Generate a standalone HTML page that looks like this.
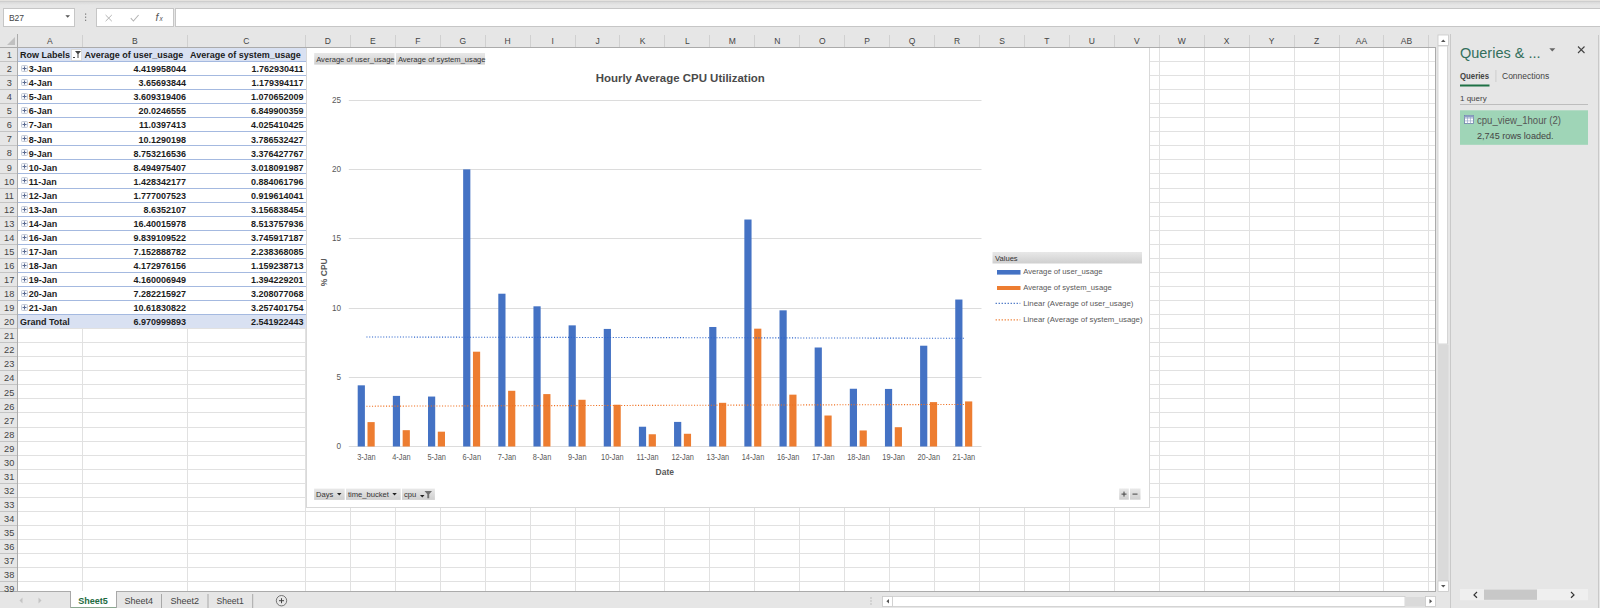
<!DOCTYPE html>
<html><head><meta charset="utf-8">
<style>
html,body{margin:0;padding:0;width:1600px;height:608px;overflow:hidden;background:#e6e6e6;font-family:"Liberation Sans", sans-serif;}
.a{position:absolute;}
svg text{font-family:"Liberation Sans", sans-serif;}
.hdr text{font-size:8.5px;fill:#444;}
.pv text{font-size:9.4px;font-weight:bold;fill:#1c1c1c;}
.ax{font-size:8.2px;fill:#595959;}
.axt{font-size:8.5px;fill:#595959;font-weight:bold;}
.title{font-size:11.6px;fill:#4a4a4a;font-weight:bold;}
.leg{font-size:7.6px;fill:#595959;}
.btn{font-size:7.6px;fill:#333;}
.tabA{font-size:9.3px;font-weight:bold;fill:#1e6b41;}
.tab{font-size:9.3px;fill:#444;}
.qt{font-size:15.5px;fill:#336f5c;}
.qtab{font-size:8.5px;fill:#444;}
.qs{font-size:8px;fill:#444;}
.qi{font-size:10px;fill:#555;}
.qr{font-size:8.5px;fill:#444;}
</style></head><body>
<div class="a" style="left:0;top:0;width:1600px;height:1px;background:#e4e2df"></div>
<div class="a" style="left:0;top:1px;width:1600px;height:1px;background:#cecece"></div>
<div class="a" style="left:0;top:2px;width:1600px;height:3px;background:linear-gradient(#d9d9d9,#e6e6e6)"></div>
<div class="a" style="left:3px;top:8px;width:70px;height:17px;background:#fff;border:1px solid #c6c6c6"></div>
<div class="a" style="left:96px;top:8px;width:76px;height:17px;border:1px solid #c6c6c6;background:#fff"></div>
<div class="a" style="left:175px;top:8px;width:1430px;height:17px;background:#fff;border:1px solid #c6c6c6"></div>
<svg class="a" style="left:0;top:0" width="1600" height="34">
<text x="8.9" y="21" textLength="15.2" lengthAdjust="spacingAndGlyphs" font-size="9px" fill="#444">B27</text>
<path d="M65.4 15.2 h4.6 l-2.3 2.6 z" fill="#555"/>
<rect x="85" y="13.5" width="1.2" height="1.2" fill="#777"/><rect x="85" y="16.6" width="1.2" height="1.2" fill="#777"/><rect x="85" y="19.7" width="1.2" height="1.2" fill="#777"/>
<path d="M105.6 15 l6.2 6.2 M111.8 15 l-6.2 6.2" stroke="#b4b4b4" stroke-width="1"/>
<path d="M130.8 18.2 l2.6 2.8 l5.2 -6" stroke="#b4b4b4" stroke-width="1.1" fill="none"/>
<text x="155.5" y="21.2" font-family="Liberation Serif" font-style="italic" font-size="10.5px" fill="#555">f</text><text x="159.5" y="21.2" font-family="Liberation Serif" font-style="italic" font-size="6.5px" fill="#555">x</text>
</svg>
<svg class="a" style="left:0;top:0" width="1600" height="608">
<defs><linearGradient id="gbtn" x1="0" y1="0" x2="0" y2="1"><stop offset="0" stop-color="#e8e8e8"/><stop offset="1" stop-color="#cfcfcf"/></linearGradient></defs>
<rect x="18" y="48" width="1417" height="543" fill="#fff"/>
<rect x="18" y="61" width="1417" height="1" fill="#e1e1e1"/><rect x="18" y="75" width="1417" height="1" fill="#e1e1e1"/><rect x="18" y="89" width="1417" height="1" fill="#e1e1e1"/><rect x="18" y="103" width="1417" height="1" fill="#e1e1e1"/><rect x="18" y="117" width="1417" height="1" fill="#e1e1e1"/><rect x="18" y="131" width="1417" height="1" fill="#e1e1e1"/><rect x="18" y="145" width="1417" height="1" fill="#e1e1e1"/><rect x="18" y="159" width="1417" height="1" fill="#e1e1e1"/><rect x="18" y="173" width="1417" height="1" fill="#e1e1e1"/><rect x="18" y="188" width="1417" height="1" fill="#e1e1e1"/><rect x="18" y="202" width="1417" height="1" fill="#e1e1e1"/><rect x="18" y="216" width="1417" height="1" fill="#e1e1e1"/><rect x="18" y="230" width="1417" height="1" fill="#e1e1e1"/><rect x="18" y="244" width="1417" height="1" fill="#e1e1e1"/><rect x="18" y="258" width="1417" height="1" fill="#e1e1e1"/><rect x="18" y="272" width="1417" height="1" fill="#e1e1e1"/><rect x="18" y="286" width="1417" height="1" fill="#e1e1e1"/><rect x="18" y="300" width="1417" height="1" fill="#e1e1e1"/><rect x="18" y="314" width="1417" height="1" fill="#e1e1e1"/><rect x="18" y="328" width="1417" height="1" fill="#e1e1e1"/><rect x="18" y="342" width="1417" height="1" fill="#e1e1e1"/><rect x="18" y="356" width="1417" height="1" fill="#e1e1e1"/><rect x="18" y="370" width="1417" height="1" fill="#e1e1e1"/><rect x="18" y="384" width="1417" height="1" fill="#e1e1e1"/><rect x="18" y="398" width="1417" height="1" fill="#e1e1e1"/><rect x="18" y="412" width="1417" height="1" fill="#e1e1e1"/><rect x="18" y="427" width="1417" height="1" fill="#e1e1e1"/><rect x="18" y="441" width="1417" height="1" fill="#e1e1e1"/><rect x="18" y="455" width="1417" height="1" fill="#e1e1e1"/><rect x="18" y="469" width="1417" height="1" fill="#e1e1e1"/><rect x="18" y="483" width="1417" height="1" fill="#e1e1e1"/><rect x="18" y="497" width="1417" height="1" fill="#e1e1e1"/><rect x="18" y="511" width="1417" height="1" fill="#e1e1e1"/><rect x="18" y="525" width="1417" height="1" fill="#e1e1e1"/><rect x="18" y="539" width="1417" height="1" fill="#e1e1e1"/><rect x="18" y="553" width="1417" height="1" fill="#e1e1e1"/><rect x="18" y="567" width="1417" height="1" fill="#e1e1e1"/><rect x="18" y="581" width="1417" height="1" fill="#e1e1e1"/><rect x="82" y="48" width="1" height="543" fill="#e1e1e1"/><rect x="187" y="48" width="1" height="543" fill="#e1e1e1"/><rect x="305" y="48" width="1" height="543" fill="#e1e1e1"/><rect x="350" y="48" width="1" height="543" fill="#e1e1e1"/><rect x="395" y="48" width="1" height="543" fill="#e1e1e1"/><rect x="440" y="48" width="1" height="543" fill="#e1e1e1"/><rect x="485" y="48" width="1" height="543" fill="#e1e1e1"/><rect x="530" y="48" width="1" height="543" fill="#e1e1e1"/><rect x="575" y="48" width="1" height="543" fill="#e1e1e1"/><rect x="619" y="48" width="1" height="543" fill="#e1e1e1"/><rect x="664" y="48" width="1" height="543" fill="#e1e1e1"/><rect x="709" y="48" width="1" height="543" fill="#e1e1e1"/><rect x="754" y="48" width="1" height="543" fill="#e1e1e1"/><rect x="799" y="48" width="1" height="543" fill="#e1e1e1"/><rect x="844" y="48" width="1" height="543" fill="#e1e1e1"/><rect x="889" y="48" width="1" height="543" fill="#e1e1e1"/><rect x="934" y="48" width="1" height="543" fill="#e1e1e1"/><rect x="979" y="48" width="1" height="543" fill="#e1e1e1"/><rect x="1024" y="48" width="1" height="543" fill="#e1e1e1"/><rect x="1069" y="48" width="1" height="543" fill="#e1e1e1"/><rect x="1114" y="48" width="1" height="543" fill="#e1e1e1"/><rect x="1159" y="48" width="1" height="543" fill="#e1e1e1"/><rect x="1204" y="48" width="1" height="543" fill="#e1e1e1"/><rect x="1249" y="48" width="1" height="543" fill="#e1e1e1"/><rect x="1294" y="48" width="1" height="543" fill="#e1e1e1"/><rect x="1339" y="48" width="1" height="543" fill="#e1e1e1"/><rect x="1383" y="48" width="1" height="543" fill="#e1e1e1"/><rect x="1428" y="48" width="1" height="543" fill="#e1e1e1"/><rect x="18" y="48" width="288" height="280" fill="#ffffff"/><rect x="18" y="48" width="288" height="13" fill="#d9e1f2"/><rect x="18" y="315" width="288" height="13" fill="#d9e1f2"/><rect x="18" y="61" width="288" height="1" fill="#a4b9e0"/><rect x="18" y="75" width="288" height="1" fill="#a4b9e0"/><rect x="18" y="89" width="288" height="1" fill="#a4b9e0"/><rect x="18" y="103" width="288" height="1" fill="#a4b9e0"/><rect x="18" y="117" width="288" height="1" fill="#a4b9e0"/><rect x="18" y="131" width="288" height="1" fill="#a4b9e0"/><rect x="18" y="145" width="288" height="1" fill="#a4b9e0"/><rect x="18" y="159" width="288" height="1" fill="#a4b9e0"/><rect x="18" y="173" width="288" height="1" fill="#a4b9e0"/><rect x="18" y="188" width="288" height="1" fill="#a4b9e0"/><rect x="18" y="202" width="288" height="1" fill="#a4b9e0"/><rect x="18" y="216" width="288" height="1" fill="#a4b9e0"/><rect x="18" y="230" width="288" height="1" fill="#a4b9e0"/><rect x="18" y="244" width="288" height="1" fill="#a4b9e0"/><rect x="18" y="258" width="288" height="1" fill="#a4b9e0"/><rect x="18" y="272" width="288" height="1" fill="#a4b9e0"/><rect x="18" y="286" width="288" height="1" fill="#a4b9e0"/><rect x="18" y="300" width="288" height="1" fill="#a4b9e0"/><rect x="18" y="314" width="288" height="1" fill="#a4b9e0"/><rect x="18" y="328" width="288" height="1" fill="#e1e1e1"/>
<g class="pv"><text textLength="50.01" lengthAdjust="spacingAndGlyphs" x="20" y="58.1">Row Labels</text><text textLength="98.71" lengthAdjust="spacingAndGlyphs" x="84.5" y="58.1">Average of user_usage</text><text textLength="110.72" lengthAdjust="spacingAndGlyphs" x="190" y="58.1">Average of system_usage</text><text textLength="23.51" lengthAdjust="spacingAndGlyphs" x="28.8" y="72.2">3-Jan</text><text textLength="52.55" lengthAdjust="spacingAndGlyphs" x="186" y="72.2" text-anchor="end">4.419958044</text><text textLength="52.06" lengthAdjust="spacingAndGlyphs" x="303.5" y="72.2" text-anchor="end">1.762930411</text><text textLength="23.51" lengthAdjust="spacingAndGlyphs" x="28.8" y="86.2">4-Jan</text><text textLength="47.55" lengthAdjust="spacingAndGlyphs" x="186" y="86.2" text-anchor="end">3.65693844</text><text textLength="52.06" lengthAdjust="spacingAndGlyphs" x="303.5" y="86.2" text-anchor="end">1.179394117</text><text textLength="23.51" lengthAdjust="spacingAndGlyphs" x="28.8" y="100.3">5-Jan</text><text textLength="52.55" lengthAdjust="spacingAndGlyphs" x="186" y="100.3" text-anchor="end">3.609319406</text><text textLength="52.55" lengthAdjust="spacingAndGlyphs" x="303.5" y="100.3" text-anchor="end">1.070652009</text><text textLength="23.51" lengthAdjust="spacingAndGlyphs" x="28.8" y="114.3">6-Jan</text><text textLength="47.55" lengthAdjust="spacingAndGlyphs" x="186" y="114.3" text-anchor="end">20.0246555</text><text textLength="52.55" lengthAdjust="spacingAndGlyphs" x="303.5" y="114.3" text-anchor="end">6.849900359</text><text textLength="23.51" lengthAdjust="spacingAndGlyphs" x="28.8" y="128.4">7-Jan</text><text textLength="47.05" lengthAdjust="spacingAndGlyphs" x="186" y="128.4" text-anchor="end">11.0397413</text><text textLength="52.55" lengthAdjust="spacingAndGlyphs" x="303.5" y="128.4" text-anchor="end">4.025410425</text><text textLength="23.51" lengthAdjust="spacingAndGlyphs" x="28.8" y="142.5">8-Jan</text><text textLength="47.55" lengthAdjust="spacingAndGlyphs" x="186" y="142.5" text-anchor="end">10.1290198</text><text textLength="52.55" lengthAdjust="spacingAndGlyphs" x="303.5" y="142.5" text-anchor="end">3.786532427</text><text textLength="23.51" lengthAdjust="spacingAndGlyphs" x="28.8" y="156.5">9-Jan</text><text textLength="52.55" lengthAdjust="spacingAndGlyphs" x="186" y="156.5" text-anchor="end">8.753216536</text><text textLength="52.55" lengthAdjust="spacingAndGlyphs" x="303.5" y="156.5" text-anchor="end">3.376427767</text><text textLength="28.52" lengthAdjust="spacingAndGlyphs" x="28.8" y="170.6">10-Jan</text><text textLength="52.55" lengthAdjust="spacingAndGlyphs" x="186" y="170.6" text-anchor="end">8.494975407</text><text textLength="52.55" lengthAdjust="spacingAndGlyphs" x="303.5" y="170.6" text-anchor="end">3.018091987</text><text textLength="28.02" lengthAdjust="spacingAndGlyphs" x="28.8" y="184.6">11-Jan</text><text textLength="52.55" lengthAdjust="spacingAndGlyphs" x="186" y="184.6" text-anchor="end">1.428342177</text><text textLength="52.55" lengthAdjust="spacingAndGlyphs" x="303.5" y="184.6" text-anchor="end">0.884061796</text><text textLength="28.52" lengthAdjust="spacingAndGlyphs" x="28.8" y="198.7">12-Jan</text><text textLength="52.55" lengthAdjust="spacingAndGlyphs" x="186" y="198.7" text-anchor="end">1.777007523</text><text textLength="52.55" lengthAdjust="spacingAndGlyphs" x="303.5" y="198.7" text-anchor="end">0.919614041</text><text textLength="28.52" lengthAdjust="spacingAndGlyphs" x="28.8" y="212.8">13-Jan</text><text textLength="42.54" lengthAdjust="spacingAndGlyphs" x="186" y="212.8" text-anchor="end">8.6352107</text><text textLength="52.55" lengthAdjust="spacingAndGlyphs" x="303.5" y="212.8" text-anchor="end">3.156838454</text><text textLength="28.52" lengthAdjust="spacingAndGlyphs" x="28.8" y="226.8">14-Jan</text><text textLength="52.55" lengthAdjust="spacingAndGlyphs" x="186" y="226.8" text-anchor="end">16.40015978</text><text textLength="52.55" lengthAdjust="spacingAndGlyphs" x="303.5" y="226.8" text-anchor="end">8.513757936</text><text textLength="28.52" lengthAdjust="spacingAndGlyphs" x="28.8" y="240.9">16-Jan</text><text textLength="52.55" lengthAdjust="spacingAndGlyphs" x="186" y="240.9" text-anchor="end">9.839109522</text><text textLength="52.55" lengthAdjust="spacingAndGlyphs" x="303.5" y="240.9" text-anchor="end">3.745917187</text><text textLength="28.52" lengthAdjust="spacingAndGlyphs" x="28.8" y="254.9">17-Jan</text><text textLength="52.55" lengthAdjust="spacingAndGlyphs" x="186" y="254.9" text-anchor="end">7.152888782</text><text textLength="52.55" lengthAdjust="spacingAndGlyphs" x="303.5" y="254.9" text-anchor="end">2.238368085</text><text textLength="28.52" lengthAdjust="spacingAndGlyphs" x="28.8" y="269.0">18-Jan</text><text textLength="52.55" lengthAdjust="spacingAndGlyphs" x="186" y="269.0" text-anchor="end">4.172976156</text><text textLength="52.55" lengthAdjust="spacingAndGlyphs" x="303.5" y="269.0" text-anchor="end">1.159238713</text><text textLength="28.52" lengthAdjust="spacingAndGlyphs" x="28.8" y="283.1">19-Jan</text><text textLength="52.55" lengthAdjust="spacingAndGlyphs" x="186" y="283.1" text-anchor="end">4.160006949</text><text textLength="52.55" lengthAdjust="spacingAndGlyphs" x="303.5" y="283.1" text-anchor="end">1.394229201</text><text textLength="28.52" lengthAdjust="spacingAndGlyphs" x="28.8" y="297.1">20-Jan</text><text textLength="52.55" lengthAdjust="spacingAndGlyphs" x="186" y="297.1" text-anchor="end">7.282215927</text><text textLength="52.55" lengthAdjust="spacingAndGlyphs" x="303.5" y="297.1" text-anchor="end">3.208077068</text><text textLength="28.52" lengthAdjust="spacingAndGlyphs" x="28.8" y="311.2">21-Jan</text><text textLength="52.55" lengthAdjust="spacingAndGlyphs" x="186" y="311.2" text-anchor="end">10.61830822</text><text textLength="52.55" lengthAdjust="spacingAndGlyphs" x="303.5" y="311.2" text-anchor="end">3.257401754</text><text textLength="49.83" lengthAdjust="spacingAndGlyphs" x="20" y="325.2">Grand Total</text><text textLength="52.55" lengthAdjust="spacingAndGlyphs" x="186" y="325.2" text-anchor="end">6.970999893</text><text textLength="52.55" lengthAdjust="spacingAndGlyphs" x="303.5" y="325.2" text-anchor="end">2.541922443</text></g>
<rect x="21.5" y="65.5" width="6" height="6" fill="#f4f6fa" stroke="#c3cad8" stroke-width="1" rx="1"/><path d="M22.5 68.5 h4 M24.5 66.5 v4" stroke="#5a6a90" stroke-width="1"/><rect x="21.5" y="79.5" width="6" height="6" fill="#f4f6fa" stroke="#c3cad8" stroke-width="1" rx="1"/><path d="M22.5 82.5 h4 M24.5 80.5 v4" stroke="#5a6a90" stroke-width="1"/><rect x="21.5" y="93.5" width="6" height="6" fill="#f4f6fa" stroke="#c3cad8" stroke-width="1" rx="1"/><path d="M22.5 96.5 h4 M24.5 94.5 v4" stroke="#5a6a90" stroke-width="1"/><rect x="21.5" y="107.5" width="6" height="6" fill="#f4f6fa" stroke="#c3cad8" stroke-width="1" rx="1"/><path d="M22.5 110.5 h4 M24.5 108.5 v4" stroke="#5a6a90" stroke-width="1"/><rect x="21.5" y="121.5" width="6" height="6" fill="#f4f6fa" stroke="#c3cad8" stroke-width="1" rx="1"/><path d="M22.5 124.5 h4 M24.5 122.5 v4" stroke="#5a6a90" stroke-width="1"/><rect x="21.5" y="135.5" width="6" height="6" fill="#f4f6fa" stroke="#c3cad8" stroke-width="1" rx="1"/><path d="M22.5 138.5 h4 M24.5 136.5 v4" stroke="#5a6a90" stroke-width="1"/><rect x="21.5" y="149.5" width="6" height="6" fill="#f4f6fa" stroke="#c3cad8" stroke-width="1" rx="1"/><path d="M22.5 152.5 h4 M24.5 150.5 v4" stroke="#5a6a90" stroke-width="1"/><rect x="21.5" y="163.5" width="6" height="6" fill="#f4f6fa" stroke="#c3cad8" stroke-width="1" rx="1"/><path d="M22.5 166.5 h4 M24.5 164.5 v4" stroke="#5a6a90" stroke-width="1"/><rect x="21.5" y="177.5" width="6" height="6" fill="#f4f6fa" stroke="#c3cad8" stroke-width="1" rx="1"/><path d="M22.5 180.5 h4 M24.5 178.5 v4" stroke="#5a6a90" stroke-width="1"/><rect x="21.5" y="192.5" width="6" height="6" fill="#f4f6fa" stroke="#c3cad8" stroke-width="1" rx="1"/><path d="M22.5 195.5 h4 M24.5 193.5 v4" stroke="#5a6a90" stroke-width="1"/><rect x="21.5" y="206.5" width="6" height="6" fill="#f4f6fa" stroke="#c3cad8" stroke-width="1" rx="1"/><path d="M22.5 209.5 h4 M24.5 207.5 v4" stroke="#5a6a90" stroke-width="1"/><rect x="21.5" y="220.5" width="6" height="6" fill="#f4f6fa" stroke="#c3cad8" stroke-width="1" rx="1"/><path d="M22.5 223.5 h4 M24.5 221.5 v4" stroke="#5a6a90" stroke-width="1"/><rect x="21.5" y="234.5" width="6" height="6" fill="#f4f6fa" stroke="#c3cad8" stroke-width="1" rx="1"/><path d="M22.5 237.5 h4 M24.5 235.5 v4" stroke="#5a6a90" stroke-width="1"/><rect x="21.5" y="248.5" width="6" height="6" fill="#f4f6fa" stroke="#c3cad8" stroke-width="1" rx="1"/><path d="M22.5 251.5 h4 M24.5 249.5 v4" stroke="#5a6a90" stroke-width="1"/><rect x="21.5" y="262.5" width="6" height="6" fill="#f4f6fa" stroke="#c3cad8" stroke-width="1" rx="1"/><path d="M22.5 265.5 h4 M24.5 263.5 v4" stroke="#5a6a90" stroke-width="1"/><rect x="21.5" y="276.5" width="6" height="6" fill="#f4f6fa" stroke="#c3cad8" stroke-width="1" rx="1"/><path d="M22.5 279.5 h4 M24.5 277.5 v4" stroke="#5a6a90" stroke-width="1"/><rect x="21.5" y="290.5" width="6" height="6" fill="#f4f6fa" stroke="#c3cad8" stroke-width="1" rx="1"/><path d="M22.5 293.5 h4 M24.5 291.5 v4" stroke="#5a6a90" stroke-width="1"/><rect x="21.5" y="304.5" width="6" height="6" fill="#f4f6fa" stroke="#c3cad8" stroke-width="1" rx="1"/><path d="M22.5 307.5 h4 M24.5 305.5 v4" stroke="#5a6a90" stroke-width="1"/><rect x="71.5" y="49.5" width="10" height="11" fill="#fff" stroke="#dadada"/><path d="M75 51 h6 l-2.5 3 v4 h-1 v-4 z" fill="#444"/><rect x="73" y="57" width="2" height="1" fill="#444"/>
<rect x="0" y="34" width="1436" height="14" fill="#e6e6e6"/><rect x="0" y="47" width="1436" height="1" fill="#ababab"/><rect x="0" y="48" width="17" height="543" fill="#e6e6e6"/><rect x="17" y="34" width="1" height="557" fill="#ababab"/><rect x="82" y="35" width="1" height="12" fill="#d0d0d0"/><rect x="187" y="35" width="1" height="12" fill="#d0d0d0"/><rect x="305" y="35" width="1" height="12" fill="#d0d0d0"/><rect x="350" y="35" width="1" height="12" fill="#d0d0d0"/><rect x="395" y="35" width="1" height="12" fill="#d0d0d0"/><rect x="440" y="35" width="1" height="12" fill="#d0d0d0"/><rect x="485" y="35" width="1" height="12" fill="#d0d0d0"/><rect x="530" y="35" width="1" height="12" fill="#d0d0d0"/><rect x="575" y="35" width="1" height="12" fill="#d0d0d0"/><rect x="619" y="35" width="1" height="12" fill="#d0d0d0"/><rect x="664" y="35" width="1" height="12" fill="#d0d0d0"/><rect x="709" y="35" width="1" height="12" fill="#d0d0d0"/><rect x="754" y="35" width="1" height="12" fill="#d0d0d0"/><rect x="799" y="35" width="1" height="12" fill="#d0d0d0"/><rect x="844" y="35" width="1" height="12" fill="#d0d0d0"/><rect x="889" y="35" width="1" height="12" fill="#d0d0d0"/><rect x="934" y="35" width="1" height="12" fill="#d0d0d0"/><rect x="979" y="35" width="1" height="12" fill="#d0d0d0"/><rect x="1024" y="35" width="1" height="12" fill="#d0d0d0"/><rect x="1069" y="35" width="1" height="12" fill="#d0d0d0"/><rect x="1114" y="35" width="1" height="12" fill="#d0d0d0"/><rect x="1159" y="35" width="1" height="12" fill="#d0d0d0"/><rect x="1204" y="35" width="1" height="12" fill="#d0d0d0"/><rect x="1249" y="35" width="1" height="12" fill="#d0d0d0"/><rect x="1294" y="35" width="1" height="12" fill="#d0d0d0"/><rect x="1339" y="35" width="1" height="12" fill="#d0d0d0"/><rect x="1383" y="35" width="1" height="12" fill="#d0d0d0"/><rect x="1428" y="35" width="1" height="12" fill="#d0d0d0"/><rect x="0" y="61" width="17" height="1" fill="#c4c4c4"/><rect x="0" y="75" width="17" height="1" fill="#c4c4c4"/><rect x="0" y="89" width="17" height="1" fill="#c4c4c4"/><rect x="0" y="103" width="17" height="1" fill="#c4c4c4"/><rect x="0" y="117" width="17" height="1" fill="#c4c4c4"/><rect x="0" y="131" width="17" height="1" fill="#c4c4c4"/><rect x="0" y="145" width="17" height="1" fill="#c4c4c4"/><rect x="0" y="159" width="17" height="1" fill="#c4c4c4"/><rect x="0" y="173" width="17" height="1" fill="#c4c4c4"/><rect x="0" y="188" width="17" height="1" fill="#c4c4c4"/><rect x="0" y="202" width="17" height="1" fill="#c4c4c4"/><rect x="0" y="216" width="17" height="1" fill="#c4c4c4"/><rect x="0" y="230" width="17" height="1" fill="#c4c4c4"/><rect x="0" y="244" width="17" height="1" fill="#c4c4c4"/><rect x="0" y="258" width="17" height="1" fill="#c4c4c4"/><rect x="0" y="272" width="17" height="1" fill="#c4c4c4"/><rect x="0" y="286" width="17" height="1" fill="#c4c4c4"/><rect x="0" y="300" width="17" height="1" fill="#c4c4c4"/><rect x="0" y="314" width="17" height="1" fill="#c4c4c4"/><rect x="0" y="328" width="17" height="1" fill="#c4c4c4"/><rect x="0" y="342" width="17" height="1" fill="#c4c4c4"/><rect x="0" y="356" width="17" height="1" fill="#c4c4c4"/><rect x="0" y="370" width="17" height="1" fill="#c4c4c4"/><rect x="0" y="384" width="17" height="1" fill="#c4c4c4"/><rect x="0" y="398" width="17" height="1" fill="#c4c4c4"/><rect x="0" y="412" width="17" height="1" fill="#c4c4c4"/><rect x="0" y="427" width="17" height="1" fill="#c4c4c4"/><rect x="0" y="441" width="17" height="1" fill="#c4c4c4"/><rect x="0" y="455" width="17" height="1" fill="#c4c4c4"/><rect x="0" y="469" width="17" height="1" fill="#c4c4c4"/><rect x="0" y="483" width="17" height="1" fill="#c4c4c4"/><rect x="0" y="497" width="17" height="1" fill="#c4c4c4"/><rect x="0" y="511" width="17" height="1" fill="#c4c4c4"/><rect x="0" y="525" width="17" height="1" fill="#c4c4c4"/><rect x="0" y="539" width="17" height="1" fill="#c4c4c4"/><rect x="0" y="553" width="17" height="1" fill="#c4c4c4"/><rect x="0" y="567" width="17" height="1" fill="#c4c4c4"/><rect x="0" y="581" width="17" height="1" fill="#c4c4c4"/><path d="M15 37 L15 45 L7 45 Z" fill="#c0c0c0"/><rect x="1435" y="48" width="1" height="544" fill="#ababab"/><rect x="0" y="591" width="1436" height="1" fill="#ababab"/>
<g class="hdr"><text x="49.9" y="44" text-anchor="middle">A</text><text x="134.9" y="44" text-anchor="middle">B</text><text x="246.3" y="44" text-anchor="middle">C</text><text x="327.9" y="44" text-anchor="middle">D</text><text x="372.8" y="44" text-anchor="middle">E</text><text x="417.8" y="44" text-anchor="middle">F</text><text x="462.7" y="44" text-anchor="middle">G</text><text x="507.6" y="44" text-anchor="middle">H</text><text x="552.6" y="44" text-anchor="middle">I</text><text x="597.5" y="44" text-anchor="middle">J</text><text x="642.5" y="44" text-anchor="middle">K</text><text x="687.4" y="44" text-anchor="middle">L</text><text x="732.3" y="44" text-anchor="middle">M</text><text x="777.3" y="44" text-anchor="middle">N</text><text x="822.2" y="44" text-anchor="middle">O</text><text x="867.1" y="44" text-anchor="middle">P</text><text x="912.1" y="44" text-anchor="middle">Q</text><text x="957.0" y="44" text-anchor="middle">R</text><text x="1002.0" y="44" text-anchor="middle">S</text><text x="1046.9" y="44" text-anchor="middle">T</text><text x="1091.8" y="44" text-anchor="middle">U</text><text x="1136.8" y="44" text-anchor="middle">V</text><text x="1181.7" y="44" text-anchor="middle">W</text><text x="1226.7" y="44" text-anchor="middle">X</text><text x="1271.6" y="44" text-anchor="middle">Y</text><text x="1316.5" y="44" text-anchor="middle">Z</text><text x="1361.5" y="44" text-anchor="middle">AA</text><text x="1406.4" y="44" text-anchor="middle">AB</text><text x="9.2" y="58.0" text-anchor="middle" style="font-size:9.2px">1</text><text x="9.2" y="72.1" text-anchor="middle" style="font-size:9.2px">2</text><text x="9.2" y="86.1" text-anchor="middle" style="font-size:9.2px">3</text><text x="9.2" y="100.2" text-anchor="middle" style="font-size:9.2px">4</text><text x="9.2" y="114.3" text-anchor="middle" style="font-size:9.2px">5</text><text x="9.2" y="128.3" text-anchor="middle" style="font-size:9.2px">6</text><text x="9.2" y="142.4" text-anchor="middle" style="font-size:9.2px">7</text><text x="9.2" y="156.4" text-anchor="middle" style="font-size:9.2px">8</text><text x="9.2" y="170.5" text-anchor="middle" style="font-size:9.2px">9</text><text x="9.2" y="184.6" text-anchor="middle" style="font-size:9.2px">10</text><text x="9.2" y="198.6" text-anchor="middle" style="font-size:9.2px">11</text><text x="9.2" y="212.7" text-anchor="middle" style="font-size:9.2px">12</text><text x="9.2" y="226.8" text-anchor="middle" style="font-size:9.2px">13</text><text x="9.2" y="240.8" text-anchor="middle" style="font-size:9.2px">14</text><text x="9.2" y="254.9" text-anchor="middle" style="font-size:9.2px">15</text><text x="9.2" y="268.9" text-anchor="middle" style="font-size:9.2px">16</text><text x="9.2" y="283.0" text-anchor="middle" style="font-size:9.2px">17</text><text x="9.2" y="297.1" text-anchor="middle" style="font-size:9.2px">18</text><text x="9.2" y="311.1" text-anchor="middle" style="font-size:9.2px">19</text><text x="9.2" y="325.2" text-anchor="middle" style="font-size:9.2px">20</text><text x="9.2" y="339.2" text-anchor="middle" style="font-size:9.2px">21</text><text x="9.2" y="353.3" text-anchor="middle" style="font-size:9.2px">22</text><text x="9.2" y="367.4" text-anchor="middle" style="font-size:9.2px">23</text><text x="9.2" y="381.4" text-anchor="middle" style="font-size:9.2px">24</text><text x="9.2" y="395.5" text-anchor="middle" style="font-size:9.2px">25</text><text x="9.2" y="409.5" text-anchor="middle" style="font-size:9.2px">26</text><text x="9.2" y="423.6" text-anchor="middle" style="font-size:9.2px">27</text><text x="9.2" y="437.7" text-anchor="middle" style="font-size:9.2px">28</text><text x="9.2" y="451.7" text-anchor="middle" style="font-size:9.2px">29</text><text x="9.2" y="465.8" text-anchor="middle" style="font-size:9.2px">30</text><text x="9.2" y="479.8" text-anchor="middle" style="font-size:9.2px">31</text><text x="9.2" y="493.9" text-anchor="middle" style="font-size:9.2px">32</text><text x="9.2" y="507.9" text-anchor="middle" style="font-size:9.2px">33</text><text x="9.2" y="522.0" text-anchor="middle" style="font-size:9.2px">34</text><text x="9.2" y="536.1" text-anchor="middle" style="font-size:9.2px">35</text><text x="9.2" y="550.1" text-anchor="middle" style="font-size:9.2px">36</text><text x="9.2" y="564.2" text-anchor="middle" style="font-size:9.2px">37</text><text x="9.2" y="578.2" text-anchor="middle" style="font-size:9.2px">38</text><text x="9.2" y="592.3" text-anchor="middle" style="font-size:9.2px">39</text></g>
<rect x="306" y="48" width="844" height="460" fill="#d9d9d9"/><rect x="307" y="48" width="842" height="459" fill="#ffffff"/><rect x="348.8" y="446" width="632.7" height="1" fill="#dcdcdc"/><text x="341" y="449.0" text-anchor="end" class="ax">0</text><rect x="348.8" y="377" width="632.7" height="1" fill="#dcdcdc"/><text x="341" y="380.0" text-anchor="end" class="ax">5</text><rect x="348.8" y="308" width="632.7" height="1" fill="#dcdcdc"/><text x="341" y="311.0" text-anchor="end" class="ax">10</text><rect x="348.8" y="238" width="632.7" height="1" fill="#dcdcdc"/><text x="341" y="241.0" text-anchor="end" class="ax">15</text><rect x="348.8" y="169" width="632.7" height="1" fill="#dcdcdc"/><text x="341" y="172.0" text-anchor="end" class="ax">20</text><rect x="348.8" y="100" width="632.7" height="1" fill="#dcdcdc"/><text x="341" y="103.0" text-anchor="end" class="ax">25</text><rect x="357.70" y="385.33" width="7.2" height="61.17" fill="#4472c4"/><rect x="367.50" y="422.10" width="7.2" height="24.40" fill="#ed7d31"/><text x="366.4" y="460" text-anchor="middle" textLength="18.46" lengthAdjust="spacingAndGlyphs" class="ax">3-Jan</text><rect x="392.85" y="395.89" width="7.2" height="50.61" fill="#4472c4"/><rect x="402.65" y="430.18" width="7.2" height="16.32" fill="#ed7d31"/><text x="401.5" y="460" text-anchor="middle" textLength="18.46" lengthAdjust="spacingAndGlyphs" class="ax">4-Jan</text><rect x="428.00" y="396.55" width="7.2" height="49.95" fill="#4472c4"/><rect x="437.80" y="431.68" width="7.2" height="14.82" fill="#ed7d31"/><text x="436.7" y="460" text-anchor="middle" textLength="18.46" lengthAdjust="spacingAndGlyphs" class="ax">5-Jan</text><rect x="463.15" y="169.36" width="7.2" height="277.14" fill="#4472c4"/><rect x="472.95" y="351.70" width="7.2" height="94.80" fill="#ed7d31"/><text x="471.8" y="460" text-anchor="middle" textLength="18.46" lengthAdjust="spacingAndGlyphs" class="ax">6-Jan</text><rect x="498.30" y="293.71" width="7.2" height="152.79" fill="#4472c4"/><rect x="508.10" y="390.79" width="7.2" height="55.71" fill="#ed7d31"/><text x="507.0" y="460" text-anchor="middle" textLength="18.46" lengthAdjust="spacingAndGlyphs" class="ax">7-Jan</text><rect x="533.45" y="306.31" width="7.2" height="140.19" fill="#4472c4"/><rect x="543.25" y="394.09" width="7.2" height="52.41" fill="#ed7d31"/><text x="542.1" y="460" text-anchor="middle" textLength="18.46" lengthAdjust="spacingAndGlyphs" class="ax">8-Jan</text><rect x="568.60" y="325.36" width="7.2" height="121.14" fill="#4472c4"/><rect x="578.40" y="399.77" width="7.2" height="46.73" fill="#ed7d31"/><text x="577.3" y="460" text-anchor="middle" textLength="18.46" lengthAdjust="spacingAndGlyphs" class="ax">9-Jan</text><rect x="603.75" y="328.93" width="7.2" height="117.57" fill="#4472c4"/><rect x="613.55" y="404.73" width="7.2" height="41.77" fill="#ed7d31"/><text x="612.4" y="460" text-anchor="middle" textLength="22.57" lengthAdjust="spacingAndGlyphs" class="ax">10-Jan</text><rect x="638.90" y="426.73" width="7.2" height="19.77" fill="#4472c4"/><rect x="648.70" y="434.26" width="7.2" height="12.24" fill="#ed7d31"/><text x="647.6" y="460" text-anchor="middle" textLength="22.02" lengthAdjust="spacingAndGlyphs" class="ax">11-Jan</text><rect x="674.05" y="421.91" width="7.2" height="24.59" fill="#4472c4"/><rect x="683.85" y="433.77" width="7.2" height="12.73" fill="#ed7d31"/><text x="682.7" y="460" text-anchor="middle" textLength="22.57" lengthAdjust="spacingAndGlyphs" class="ax">12-Jan</text><rect x="709.20" y="326.99" width="7.2" height="119.51" fill="#4472c4"/><rect x="719.00" y="402.81" width="7.2" height="43.69" fill="#ed7d31"/><text x="717.9" y="460" text-anchor="middle" textLength="22.57" lengthAdjust="spacingAndGlyphs" class="ax">13-Jan</text><rect x="744.35" y="219.52" width="7.2" height="226.98" fill="#4472c4"/><rect x="754.15" y="328.67" width="7.2" height="117.83" fill="#ed7d31"/><text x="753.0" y="460" text-anchor="middle" textLength="22.57" lengthAdjust="spacingAndGlyphs" class="ax">14-Jan</text><rect x="779.50" y="310.33" width="7.2" height="136.17" fill="#4472c4"/><rect x="789.30" y="394.66" width="7.2" height="51.84" fill="#ed7d31"/><text x="788.2" y="460" text-anchor="middle" textLength="22.57" lengthAdjust="spacingAndGlyphs" class="ax">16-Jan</text><rect x="814.65" y="347.50" width="7.2" height="99.00" fill="#4472c4"/><rect x="824.45" y="415.52" width="7.2" height="30.98" fill="#ed7d31"/><text x="823.3" y="460" text-anchor="middle" textLength="22.57" lengthAdjust="spacingAndGlyphs" class="ax">17-Jan</text><rect x="849.80" y="388.75" width="7.2" height="57.75" fill="#4472c4"/><rect x="859.60" y="430.46" width="7.2" height="16.04" fill="#ed7d31"/><text x="858.5" y="460" text-anchor="middle" textLength="22.57" lengthAdjust="spacingAndGlyphs" class="ax">18-Jan</text><rect x="884.95" y="388.93" width="7.2" height="57.57" fill="#4472c4"/><rect x="894.75" y="427.20" width="7.2" height="19.30" fill="#ed7d31"/><text x="893.6" y="460" text-anchor="middle" textLength="22.57" lengthAdjust="spacingAndGlyphs" class="ax">19-Jan</text><rect x="920.10" y="345.71" width="7.2" height="100.79" fill="#4472c4"/><rect x="929.90" y="402.10" width="7.2" height="44.40" fill="#ed7d31"/><text x="928.8" y="460" text-anchor="middle" textLength="22.57" lengthAdjust="spacingAndGlyphs" class="ax">20-Jan</text><rect x="955.25" y="299.54" width="7.2" height="146.96" fill="#4472c4"/><rect x="965.05" y="401.42" width="7.2" height="45.08" fill="#ed7d31"/><text x="963.9" y="460" text-anchor="middle" textLength="22.57" lengthAdjust="spacingAndGlyphs" class="ax">21-Jan</text><line x1="366.4" y1="336.97" x2="963.9" y2="338.29" stroke="#2f66cc" stroke-width="1.1" stroke-dasharray="1.1 1.7"/><line x1="366.4" y1="406.20" x2="963.9" y2="404.45" stroke="#f07020" stroke-width="1.1" stroke-dasharray="1.1 1.7"/><text x="595.7" y="82.3" textLength="169.2" lengthAdjust="spacingAndGlyphs" class="title">Hourly Average CPU Utilization</text><text transform="translate(327.2,272.2) rotate(-90)" text-anchor="middle" class="axt">% CPU</text><text x="664.8" y="474.8" text-anchor="middle" class="axt">Date</text><rect x="992.5" y="252" width="149.5" height="11.5" fill="url(#gbtn)"/><text x="995" y="260.8" class="btn">Values</text><rect x="997" y="270" width="23.5" height="4.6" fill="#4472c4"/><rect x="997" y="286" width="23.5" height="4.0" fill="#ed7d31"/><line x1="995.6" y1="303.3" x2="1020.3" y2="303.3" stroke="#4472c4" stroke-width="1.3" stroke-dasharray="1.3 1.7"/><line x1="995.6" y1="319.8" x2="1020.3" y2="319.8" stroke="#ed7d31" stroke-width="1.3" stroke-dasharray="1.3 1.7"/><text x="1023.2" y="273.9" textLength="79.3" lengthAdjust="spacingAndGlyphs" class="leg">Average of user_usage</text><text x="1023.2" y="289.9" textLength="88.5" lengthAdjust="spacingAndGlyphs" class="leg">Average of system_usage</text><text x="1023.2" y="305.9" textLength="110.2" lengthAdjust="spacingAndGlyphs" class="leg">Linear (Average of user_usage)</text><text x="1023.2" y="321.8" textLength="119.4" lengthAdjust="spacingAndGlyphs" class="leg">Linear (Average of system_usage)</text><rect x="314.2" y="53" width="80.3" height="11.6" fill="url(#gbtn)"/><text x="316.2" y="61.599999999999994" class="btn">Average of user_usage</text><rect x="395.9" y="53" width="89.1" height="11.6" fill="url(#gbtn)"/><text x="397.9" y="61.599999999999994" class="btn">Average of system_usage</text><rect x="314.1" y="488.6" width="30.6" height="11.3" fill="url(#gbtn)"/><text x="316.1" y="496.9" class="btn">Days</text><rect x="346" y="488.6" width="54.7" height="11.3" fill="url(#gbtn)"/><text x="348" y="496.9" class="btn">time_bucket</text><rect x="402" y="488.6" width="32.9" height="11.3" fill="url(#gbtn)"/><text x="404" y="496.9" class="btn">cpu</text><path d="M337 493 h4.5 l-2.25 2.5 z" fill="#222"/><path d="M392.3 493 h4.5 l-2.25 2.5 z" fill="#222"/><path d="M420 495 h4.5 l-2.25 2.5 z" fill="#222"/><path d="M424.5 491 h7.5 l-2.8 3.3 v4 h-1.9 v-4 z" fill="#707070"/><rect x="1119.2" y="488.5" width="9.6" height="11.2" fill="url(#gbtn)"/><text x="1121.2" y="496.7" class="btn"></text><rect x="1130" y="488.5" width="10.5" height="11.2" fill="url(#gbtn)"/><text x="1132" y="496.7" class="btn"></text><path d="M1121.5 494.1 h5 M1124 491.6 v5" stroke="#444" stroke-width="1"/><path d="M1132.5 494.1 h5" stroke="#444" stroke-width="1"/>
<rect x="1436" y="34" width="14" height="558" fill="#e6e6e6"/><rect x="1438" y="35" width="10.5" height="10.5" fill="#fff" stroke="#c8c8c8" stroke-width="0.8"/><path d="M1441 42 h4.5 l-2.25 -2.6 z" fill="#555"/><rect x="1438" y="46" width="9.6" height="298" fill="#fff" stroke="#cdcdcd" stroke-width="0.8"/><rect x="1438" y="345" width="10.5" height="236" fill="#dadada"/><rect x="1438" y="581" width="10.5" height="10.5" fill="#fff" stroke="#c8c8c8" stroke-width="0.8"/><path d="M1441 585 h4.5 l-2.25 2.6 z" fill="#555"/><rect x="1450" y="34" width="1" height="574" fill="#c9c9c9"/><rect x="0" y="592" width="1450" height="16" fill="#e6e6e6"/><path d="M22.5 597.5 l-3 3 l3 3 z" fill="#c4c4c4"/><path d="M38.5 597.5 l3 3 l-3 3 z" fill="#c4c4c4"/><rect x="70.5" y="591" width="46" height="17" fill="#fff"/><rect x="70" y="591" width="1" height="17" fill="#a8a8a8"/><rect x="116" y="591" width="1" height="17" fill="#a8a8a8"/><rect x="71" y="607" width="45" height="1" fill="#8aa890"/><text x="78.3" y="603.7" textLength="29.6" lengthAdjust="spacingAndGlyphs" class="tabA">Sheet5</text><text x="124.5" y="603.7" textLength="28.6" lengthAdjust="spacingAndGlyphs" class="tab">Sheet4</text><text x="170.5" y="603.7" textLength="28.6" lengthAdjust="spacingAndGlyphs" class="tab">Sheet2</text><text x="216.5" y="603.7" textLength="27.2" lengthAdjust="spacingAndGlyphs" class="tab">Sheet1</text><rect x="161" y="594" width="1" height="14" fill="#a8a8a8"/><rect x="207.5" y="594" width="1" height="14" fill="#a8a8a8"/><rect x="252.2" y="594" width="1" height="14" fill="#a8a8a8"/><circle cx="281.5" cy="600.7" r="5.2" fill="none" stroke="#666" stroke-width="0.9"/><path d="M279 600.7 h5 M281.5 598.2 v5" stroke="#444" stroke-width="1"/><rect x="870.5" y="597.5" width="1" height="1" fill="#999"/><rect x="870.5" y="600.5" width="1" height="1" fill="#999"/><rect x="870.5" y="603.5" width="1" height="1" fill="#999"/><rect x="882.5" y="596.5" width="10" height="10" fill="#fff" stroke="#c8c8c8" stroke-width="0.8"/><path d="M889 599 v4.4 l-2.6 -2.2 z" fill="#555"/><rect x="892.5" y="596.5" width="512.5" height="10" fill="#fff" stroke="#cdcdcd" stroke-width="0.8"/><rect x="1405.5" y="597" width="20" height="9.5" fill="#dadada"/><rect x="1425.5" y="596.5" width="10" height="10" fill="#fff" stroke="#c8c8c8" stroke-width="0.8"/><path d="M1429.5 599 v4.4 l2.6 -2.2 z" fill="#555"/><rect x="1451" y="34" width="149" height="574" fill="#e6e6e6"/><rect x="1598" y="35" width="1" height="573" fill="#c9c9c9"/><text x="1460" y="57.6" textLength="80.5" lengthAdjust="spacingAndGlyphs" class="qt">Queries &amp; ...</text><path d="M1549.3 48.2 h6 l-3 3.2 z" fill="#666"/><path d="M1578 46.5 l6.5 6.5 M1584.5 46.5 l-6.5 6.5" stroke="#444" stroke-width="1.1"/><text x="1460" y="79" textLength="29" lengthAdjust="spacingAndGlyphs" class="qtab" font-weight="bold" fill="#4a4a4a">Queries</text><rect x="1460" y="84.5" width="29.5" height="2" fill="#1e7145"/><rect x="1495.5" y="70" width="0.8" height="12" fill="#c8c8c8"/><text x="1502" y="79" class="qtab">Connections</text><text x="1460" y="100.5" class="qs">1 query</text><rect x="1460" y="104" width="128" height="1" fill="#bdbdbd"/><rect x="1460" y="110.3" width="128" height="34.5" fill="#9fd5b7"/><rect x="1464.5" y="115.5" width="9" height="8" fill="#fff" stroke="#6b7fa8" stroke-width="0.8"/><path d="M1464.5 118.2 h9 M1464.5 120.9 h9 M1467.5 115.5 v8 M1470.5 115.5 v8" stroke="#8da0c4" stroke-width="0.6"/><rect x="1464.5" y="115.5" width="9" height="2" fill="#8da0c4"/><text x="1477" y="123.6" textLength="84" lengthAdjust="spacingAndGlyphs" class="qi">cpu_view_1hour (2)</text><text x="1477" y="138.5" textLength="76.6" lengthAdjust="spacingAndGlyphs" class="qr">2,745 rows loaded.</text><rect x="1460" y="589" width="128" height="11.3" fill="#efefef"/><rect x="1484" y="589.5" width="53" height="10.3" fill="#c8c8c8"/><path d="M1477 592 l-3 2.9 l3 2.9" stroke="#333" stroke-width="1.2" fill="none"/><path d="M1571 592 l3 2.9 l-3 2.9" stroke="#333" stroke-width="1.2" fill="none"/>
</svg>
</body></html>
